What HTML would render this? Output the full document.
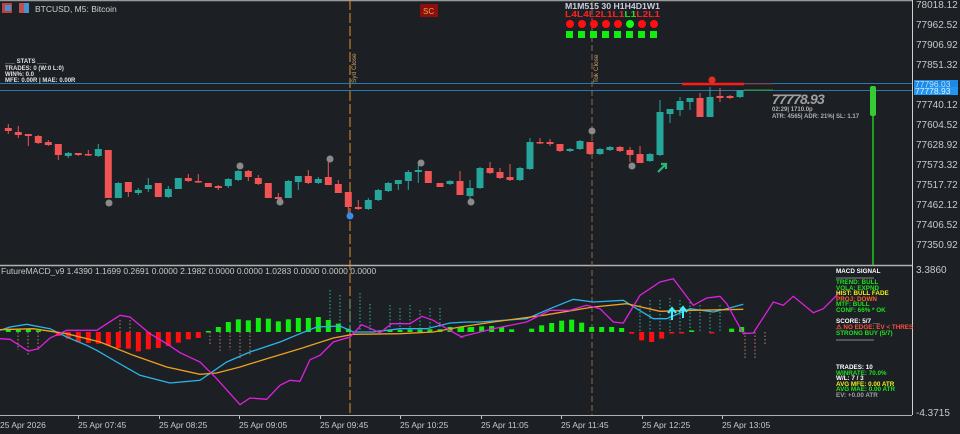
<!DOCTYPE html>
<html><head><meta charset="utf-8"><style>
html,body{margin:0;padding:0;background:#1c1f24;width:960px;height:434px;overflow:hidden}
svg{display:block}
text{font-family:"Liberation Sans",sans-serif}
.ax{fill:#c8c8c8;font-size:10px}
.t{fill:#c8c8c8;font-size:8.5px}
.s{font-size:6.3px;font-weight:bold}
</style></head><body>
<svg id="c" width="960" height="434" viewBox="0 0 960 434" xmlns="http://www.w3.org/2000/svg">
<rect width="960" height="434" fill="#1c1f24"/>
<line x1="0" y1="0.5" x2="912" y2="0.5" stroke="#9a9a9a" stroke-width="1.5"/>
<line x1="912.5" y1="0" x2="912.5" y2="415" stroke="#d0d0d0"/>
<line x1="0" y1="265.5" x2="912" y2="265.5" stroke="#b0b0b0" stroke-width="1.5"/>
<line x1="0" y1="415.5" x2="912" y2="415.5" stroke="#b0b0b0"/>
<line x1="350" y1="0" x2="350" y2="415" stroke="#e8922a" stroke-dasharray="10,3"/>
<line x1="592" y1="0" x2="592" y2="415" stroke="#8a6a4a" stroke-dasharray="6,3"/>
<text transform="translate(356,83) rotate(-90)" fill="#c8a060" font-size="6.5">Syd Close</text>
<text transform="translate(598,83) rotate(-90)" fill="#c8a060" font-size="6.5">Tok Close</text>
<line x1="0" y1="83.5" x2="912" y2="83.5" stroke="#2a7aa8"/>
<line x1="0" y1="90.5" x2="912" y2="90.5" stroke="#2a7aa8"/>
<line x1="682" y1="84" x2="744" y2="84" stroke="#ff1a1a" stroke-width="2.5"/>
<line x1="744" y1="84" x2="773" y2="84" stroke="#8a2a2a"/>
<line x1="744" y1="90" x2="773" y2="90" stroke="#2a9a2a"/>
<circle cx="712" cy="80" r="3.5" fill="#e03020"/>
<g id="candles"></g>
<g fill="#8a8a8a">
<circle cx="109" cy="203" r="3.5"/><circle cx="240" cy="166" r="3.5"/><circle cx="280" cy="202" r="3.5"/><circle cx="330" cy="159" r="3.5"/><circle cx="421" cy="163" r="3.5"/><circle cx="471" cy="202" r="3.5"/><circle cx="592" cy="131" r="3.5"/><circle cx="632" cy="166" r="3.5"/>
</g>
<circle cx="350" cy="216" r="3.5" fill="#3a8ae8"/>
<path d="M658 172 L666 164 M661 164 L666 164 L666 169" stroke="#2ab870" stroke-width="2.2" fill="none"/>
<line x1="873" y1="86" x2="873" y2="265" stroke="#22c822" stroke-width="1.5"/>
<rect x="870" y="86" width="6" height="30" rx="2" fill="#33cc33"/>
<rect x="420" y="4" width="18" height="13" fill="#8e0d0d"/>
<text x="423" y="14" fill="#e0b050" font-size="8">SC</text>
<rect x="2" y="3" width="10" height="10" fill="#c04040"/><rect x="5" y="5" width="6" height="6" fill="#4a90d0"/>
<rect x="19" y="3" width="10" height="10" fill="#c05050"/><rect x="24" y="3" width="5" height="10" fill="#4a90d0"/>
<text x="35" y="12" fill="#d0d0d0" font-size="8.5">BTCUSD, M5:  Bitcoin</text>
<g class="s" fill="#e0e0e0" style="font-size:6px">
<text x="5" y="63">___ STATS ___</text>
<text x="5" y="70">TRADES: 0  (W:0  L:0)</text>
<text x="5" y="76">WIN%:    0.0</text>
<text x="5" y="82">MFE: 0.00R  |  MAE: 0.00R</text>
</g>
<text x="565" y="9" fill="#c8d0e0" font-size="8.5" font-weight="bold" textLength="95" lengthAdjust="spacingAndGlyphs">M1M515 30 H1H4D1W1</text>
<text x="565" y="17" fill="#ff2020" font-size="8.5" font-weight="bold" textLength="95" lengthAdjust="spacingAndGlyphs">L4L4L2L1L1<tspan fill="#20e020">L1</tspan>L2L1</text>
<g fill="#ff1010"><circle cx="570" cy="24" r="4"/><circle cx="582" cy="24" r="4"/><circle cx="594" cy="24" r="4"/><circle cx="606" cy="24" r="4"/><circle cx="618" cy="24" r="4"/><circle cx="642" cy="24" r="4"/><circle cx="654" cy="24" r="4"/></g>
<circle cx="630" cy="24" r="4" fill="#10ff10"/>
<g fill="#10ee10"><rect x="566" y="31" width="7" height="7"/><rect x="578" y="31" width="7" height="7"/><rect x="590" y="31" width="7" height="7"/><rect x="602" y="31" width="7" height="7"/><rect x="614" y="31" width="7" height="7"/><rect x="626" y="31" width="7" height="7"/><rect x="638" y="31" width="7" height="7"/><rect x="650" y="31" width="7" height="7"/></g>
<text x="772" y="104" fill="#a0a0a0" font-size="14" font-weight="bold" font-style="italic" letter-spacing="-0.8">77778.93</text>
<text x="772" y="111" fill="#b0b0b0" font-size="6" font-weight="bold">02:29| 1710.0p</text>
<text x="772" y="118" fill="#b0b0b0" font-size="6" font-weight="bold">ATR: 4565| ADR: 21%| SL: 1.17</text>
<g class="ax" font-size="9.5">
<text x="916" y="8">78018.12</text><text x="916" y="28">77962.52</text><text x="916" y="48">77906.92</text><text x="916" y="68">77851.32</text>
<text x="916" y="108">77740.12</text><text x="916" y="128">77604.52</text><text x="916" y="148">77628.92</text><text x="916" y="168">77573.32</text>
<text x="916" y="188">77517.72</text><text x="916" y="208">77462.12</text><text x="916" y="228">77406.52</text><text x="916" y="248">77350.92</text>
</g>
<rect x="914" y="80" width="44" height="7" fill="#1e88e5"/><rect x="914" y="87" width="44" height="8" fill="#2196f3"/>
<text x="915" y="87" fill="#c0e0ff" font-size="8.5">77796.03</text>
<text x="915" y="94" fill="#e0f0ff" font-size="8.5">77778.93</text>
<text x="916" y="273" class="ax" font-size="9">3.3860</text>
<text x="916" y="416" class="ax" font-size="9">-4.3715</text>
<text x="1" y="274" class="t" font-size="8">FutureMACD_v9 1.4390 1.1699 0.2691 0.0000 2.1982 0.0000 0.0000 1.0283 0.0000 0.0000 0.0000</text>
<g id="hist"></g>
<polyline id="cy" fill="none" stroke="#29b6e8" stroke-width="1.3"/>
<polyline id="or" fill="none" stroke="#f0a020" stroke-width="1.3"/>
<polyline id="mg" fill="none" stroke="#e020e0" stroke-width="1.3"/>
<path d="M672 320 V309 M668 313 L672 308 L676 313 M683 318 V308 M679 312 L683 307 L687 312" stroke="#40f0ff" stroke-width="2" fill="none"/>
<g class="s">
<text x="836" y="273" fill="#ffffff">MACD SIGNAL</text>
<line x1="836" y1="278" x2="874" y2="278" stroke="#888"/>
<text x="836" y="284" fill="#20e020">TREND:  BULL</text>
<text x="836" y="290" fill="#20e020">VOLA:  EXPND</text>
<text x="836" y="295" fill="#f0f020">HIST:  BULL FADE</text>
<text x="836" y="301" fill="#ff6030">PROJ:  DOWN</text>
<text x="836" y="306" fill="#20e020">MTF:  BULL</text>
<text x="836" y="312" fill="#20e020">CONF: 66% * OK</text>
<text x="836" y="323" fill="#ffffff">SCORE: 5/7 __</text>
<text x="836" y="329" fill="#ff5040">⚠ NO EDGE: EV &lt; THRES</text>
<text x="836" y="335" fill="#20e020">STRONG BUY (5/7)</text>
<line x1="836" y1="340" x2="874" y2="340" stroke="#888"/>
<text x="836" y="369" fill="#ffffff">TRADES: 10</text>
<text x="836" y="375" fill="#20e020">WINRATE: 70.0%</text>
<text x="836" y="380" fill="#ffffff">W/L: 7 / 3</text>
<text x="836" y="386" fill="#f0f020">AVG MFE: 0.00 ATR</text>
<text x="836" y="391" fill="#20e020">AVG MAE: 0.00 ATR</text>
<text x="836" y="397" fill="#a0a0a0">EV: +0.00 ATR</text>
</g>
<g class="t" font-size="8.5">
<text x="0" y="428">25 Apr 2026</text><text x="78" y="428">25 Apr 07:45</text><text x="159" y="428">25 Apr 08:25</text><text x="239" y="428">25 Apr 09:05</text><text x="320" y="428">25 Apr 09:45</text><text x="400" y="428">25 Apr 10:25</text><text x="481" y="428">25 Apr 11:05</text><text x="561" y="428">25 Apr 11:45</text><text x="642" y="428">25 Apr 12:25</text><text x="722" y="428">25 Apr 13:05</text>
</g>
<g stroke="#c0c0c0"><line x1="78.5" y1="416" x2="78.5" y2="419"/><line x1="159.5" y1="416" x2="159.5" y2="419"/><line x1="239.5" y1="416" x2="239.5" y2="419"/><line x1="320.5" y1="416" x2="320.5" y2="419"/><line x1="400.5" y1="416" x2="400.5" y2="419"/><line x1="481.5" y1="416" x2="481.5" y2="419"/><line x1="561.5" y1="416" x2="561.5" y2="419"/><line x1="642.5" y1="416" x2="642.5" y2="419"/><line x1="722.5" y1="416" x2="722.5" y2="419"/></g>
</svg>
<script>
var NS="http://www.w3.org/2000/svg";
function el(p,t,a){var e=document.createElementNS(NS,t);for(var k in a)e.setAttribute(k,a[k]);p.appendChild(e);return e;}
var R="#f05454",G="#26a69a";
var A=[[0,'r',128,131,124,134],[1,'r',132,135,126,138],[2,'r',134,136,134,146],[3,'r',136,143,135,144],[4,'r',142,145,140,146],[5,'r',144,155,144,160],[6,'g',153,156,152,158],[7,'r',153,155,153,156],[8,'r',154,155,150,156],[9,'g',149,156,144,157],[10,'r',150,198,150,198],[11,'g',183,198,182,198],[12,'r',182,192,182,197],[13,'g',190,193,188,195],[14,'g',185,189,178,192],[15,'r',183,197,183,197],[16,'g',189,197,186,198],[17,'g',178,189,178,189],[18,'r',178,181,174,182],[19,'r',181,182,174,183],[20,'r',183,187,183,187],[21,'r',186,188,185,190],[22,'g',179,186,178,188],[23,'g',171,180,170,181],[24,'r',171,177,170,181],[25,'r',178,184,175,185],[26,'r',183,198,183,198],[27,'r',197,199,193,202],[28,'g',181,198,180,198],[29,'g',176,182,176,190],[30,'r',176,183,170,184],[31,'g',179,183,177,184],[32,'r',177,185,162,185],[33,'r',184,193,180,193],[34,'r',192,207,192,214],[35,'r',207,209,200,210],[36,'g',200,209,198,210],[37,'g',190,200,189,201],[38,'g',183,191,182,192],[39,'g',180,184,180,190],[40,'g',172,181,170,190],[41,'g',170,172,165,183],[42,'r',171,183,171,183]];
var B=[['r',183,187,183,187],['g',181,184,180,185],['r',181,195,171,195],['g',188,196,180,203],['g',168,188,167,189],['r',168,173,162,174],['r',172,178,168,179],['r',177,180,164,181],['g',168,180,167,181],['g',142,169,138,170],['r',142,143,138,144],['r',142,144,139,146],['r',144,151,144,152],['g',149,151,148,152],['g',141,149,140,150],['r',142,154,142,155],['g',149,154,148,155],['g',147,150,146,151],['r',147,151,146,152],['r',150,155,147,162],['r',154,163,146,163],['g',154,161,153,162],['g',112,155,100,156],['g',109,114,109,123],['g',101,110,97,116],['g',98,102,98,110],['r',98,117,93,117],['g',97,117,87,117],['r',96,98,88,102],['r',96,98,95,99],['g',90,97,90,98]];
var g=document.getElementById('candles');
function cd(x,c,o,cl,h,l){var col=c=='r'?R:G;el(g,'line',{x1:x,y1:h,x2:x,y2:l,stroke:col,'stroke-width':1});el(g,'rect',{x:x-3.5,y:o,width:7,height:Math.max(1.5,cl-o),fill:col});}
A.forEach(function(a){cd(8.3+10*a[0],a[1],a[2],a[3],a[4],a[5]);});
B.forEach(function(b,i){cd(440+10*i,b[0],b[1],b[2],b[3],b[4]);});
function pl(id,pts,ox,oy){var s=[];for(var i=0;i<pts.length;i+=2)s.push((ox+pts[i]/3).toFixed(1)+','+(oy+pts[i+1]/3).toFixed(1));return s;}
function set(id,a,b){document.getElementById(id).setAttribute('points',pl(id,a,0,262).concat(pl(id,b,460,262)).join(' '));}
set('cy',[0,205,30,195,80,187,150,200,200,225,260,250,290,265,350,300,420,340,510,363,600,355,680,300,750,270,840,240,900,215,950,195,1020,192,1060,210,1120,210,1200,200,1280,200,1350,183],[20,180,60,180,200,170,270,140,340,112,400,120,490,115,530,140,580,170,620,170,690,140,760,150,800,140,850,127]);
set('or',[0,203,100,200,200,215,300,240,400,280,500,315,600,337,650,333,720,315,800,290,900,260,1000,228,1060,217,1200,215,1300,210],[0,195,100,180,250,160,400,135,500,125,600,148,700,145,850,142]);
set('mg',[0,230,30,232,85,267,115,260,150,228,200,205,290,205,360,160,390,165,450,215,500,245,540,272,600,300,650,350,720,428,750,408,800,412,840,370,870,355,900,358,930,293,960,280,1000,240,1050,225,1085,188,1140,212,1175,185,1230,185,1265,163,1300,175,1340,200,1385,225],[0,225,100,200,200,180,270,145,330,145,380,130,420,140,460,180,490,183,540,100,600,60,640,50,700,130,740,108,780,103,800,125,850,215,880,213,940,120,970,130,1000,103,1060,152,1090,140,1140,90]);
var h=document.getElementById('hist');var base=332;
function bar(x,top,bot,col){el(h,'rect',{x:x-2.5,y:top,width:5,height:Math.max(1.5,bot-top),fill:col});}
[[25,200],[55,203],[85,200],[115,205]].forEach(function(v){bar(v[0]/3,262+v[1]/3,base,'#10ee10');});
[[175,222],[205,230],[235,240],[265,243],[295,245],[325,250],[355,258],[385,260],[415,268],[445,262],[475,258],[505,252],[535,242],[565,232],[595,228]].forEach(function(v){bar(v[0]/3,base,262+v[1]/3,'#ff1010');});
[[625,207],[655,195],[685,180],[715,172],[745,175],[775,168],[805,170],[835,178],[865,172],[895,168],[925,168],[955,165],[985,174],[1015,185],[1045,200],[1140,205],[1170,204],[1200,204],[1230,203],[1260,203],[1290,202],[1320,202],[1350,195],[1380,198],[1410,196]].forEach(function(v){bar(v[0]/3,262+v[1]/3,base,'#10ee10');});
[[5,195],[35,195],[65,193],[95,192],[125,195],[155,202],[215,200],[245,190],[275,183],[305,176],[335,173],[365,182],[395,195],[425,195],[455,195],[485,198],[695,205],[815,200],[845,195]].forEach(function(v){bar(460+v[0]/3,262+v[1]/3,base,'#10ee10');});
[[515,215],[545,235],[575,240],[605,230],[635,213],[665,212],[755,212]].forEach(function(v){bar(460+v[0]/3,base,262+v[1]/3,'#ff1010');});
[[330,290],[340,295],[350,300],[360,293],[370,304],[390,305],[400,308],[410,305],[420,310],[430,308],[440,308],[640,305],[650,300],[660,300],[670,298],[680,300],[690,302],[700,305],[710,310],[720,305]].forEach(function(v){el(h,'line',{x1:v[0],y1:v[1],x2:v[0],y2:base,stroke:'#2ab8a0','stroke-dasharray':'1.5,2'});});
[[18,350],[28,355],[38,350],[120,320],[130,315],[210,345],[220,352],[230,350],[240,358],[250,355],[745,360],[755,358],[765,345]].forEach(function(v){el(h,'line',{x1:v[0],y1:base,x2:v[0],y2:v[1],stroke:'#c08060','stroke-dasharray':'1.5,2'});});
</script>
</body></html>
